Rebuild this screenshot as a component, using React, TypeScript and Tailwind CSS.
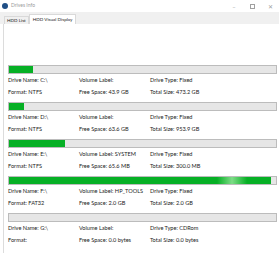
import React from "react";

type Drive = {
  name: string;
  format: string;
  label: string;
  free: string;
  type: string;
  total: string;
  used: number; // percent
  shine?: boolean;
};

const drives: Drive[] = [
  { name: "C:\\", format: "NTFS", label: "", free: "43.9 GB", type: "Fixed", total: "473.2 GB", used: 9 },
  { name: "D:\\", format: "NTFS", label: "", free: "63.6 GB", type: "Fixed", total: "953.9 GB", used: 5.6 },
  { name: "E:\\", format: "NTFS", label: "SYSTEM", free: "65.6 MB", type: "Fixed", total: "300.0 MB", used: 21 },
  { name: "F:\\", format: "FAT32", label: "HP_TOOLS", free: "2.0 GB", type: "Fixed", total: "2.0 GB", used: 98, shine: true },
  { name: "G:\\", format: "", label: "", free: "0.0 bytes", type: "CDRom", total: "0.0 bytes", used: 0 },
];

function DriveBlock({ d }: { d: Drive }) {
  return (
    <div className="flex flex-col">
      <div className="relative h-[9px] w-[269px] border border-[#bcbcbc] bg-[#e6e6e6]">
        <div className="h-full bg-[#06b025]" style={{ width: `${d.used}%` }} />
        {d.shine ? (
          <div className="absolute top-0 bottom-0 left-[208px] w-[30px] bg-gradient-to-r from-transparent via-[#7ddc86] to-transparent" />
        ) : null}
      </div>
      <div className="grid grid-cols-[71px_71px_1fr] whitespace-nowrap text-[5.6px] leading-[12px] text-[#1b1b1b]">
        <div>Drive Name: {d.name}</div>
        <div>Volume Label: {d.label}</div>
        <div>Drive Type: {d.type}</div>
        <div>Format: {d.format}</div>
        <div>Free Space: {d.free}</div>
        <div>Total Size: {d.total}</div>
      </div>
    </div>
  );
}

export default function App() {
  return (
    <div
      className="h-[253px] w-[279px] overflow-hidden bg-white flex flex-col"
      style={{ fontFamily: 'Lato, "Noto Sans", sans-serif' }}
    >
      {/* title bar */}
      <div className="h-[12px] flex items-center bg-white">
        <div className="ml-[2px] h-[6px] w-[6px] rounded-full bg-[#1f4f86]" />
        <div className="ml-[3px] text-[5px] text-[#9a9a9a]">Drives Info</div>
        <div className="ml-auto flex items-center text-[#a0a0a0] text-[6px]">
          <div className="w-[18px] text-center">–</div>
          <div className="w-[18px] flex justify-center">
            <div className="h-[5px] w-[5px] border border-[#a0a0a0]" />
          </div>
          <div className="w-[18px] text-center">✕</div>
        </div>
      </div>

      {/* tab strip */}
      <div className="h-[12px] bg-[#f0f0f0] flex items-end pl-[4px]">
        <div className="h-[8px] px-[2px] border border-b-0 border-[#d9d9d9] bg-[#f0f0f0] text-[4.6px] leading-[7px] text-[#222]">
          HDD List
        </div>
        <div className="h-[10px] px-[3px] border border-b-0 border-[#d9d9d9] bg-white text-[4.6px] leading-[8px] text-[#222]">
          HDD Visual Display
        </div>
      </div>

      {/* content */}
      <div className="flex-1 ml-[3px] border-l border-[#dcdcdc] bg-white pl-[4px] pt-[41px] flex flex-col gap-[4px]">
        {drives.map((d) => (
          <DriveBlock key={d.name} d={d} />
        ))}
      </div>
    </div>
  );
}
